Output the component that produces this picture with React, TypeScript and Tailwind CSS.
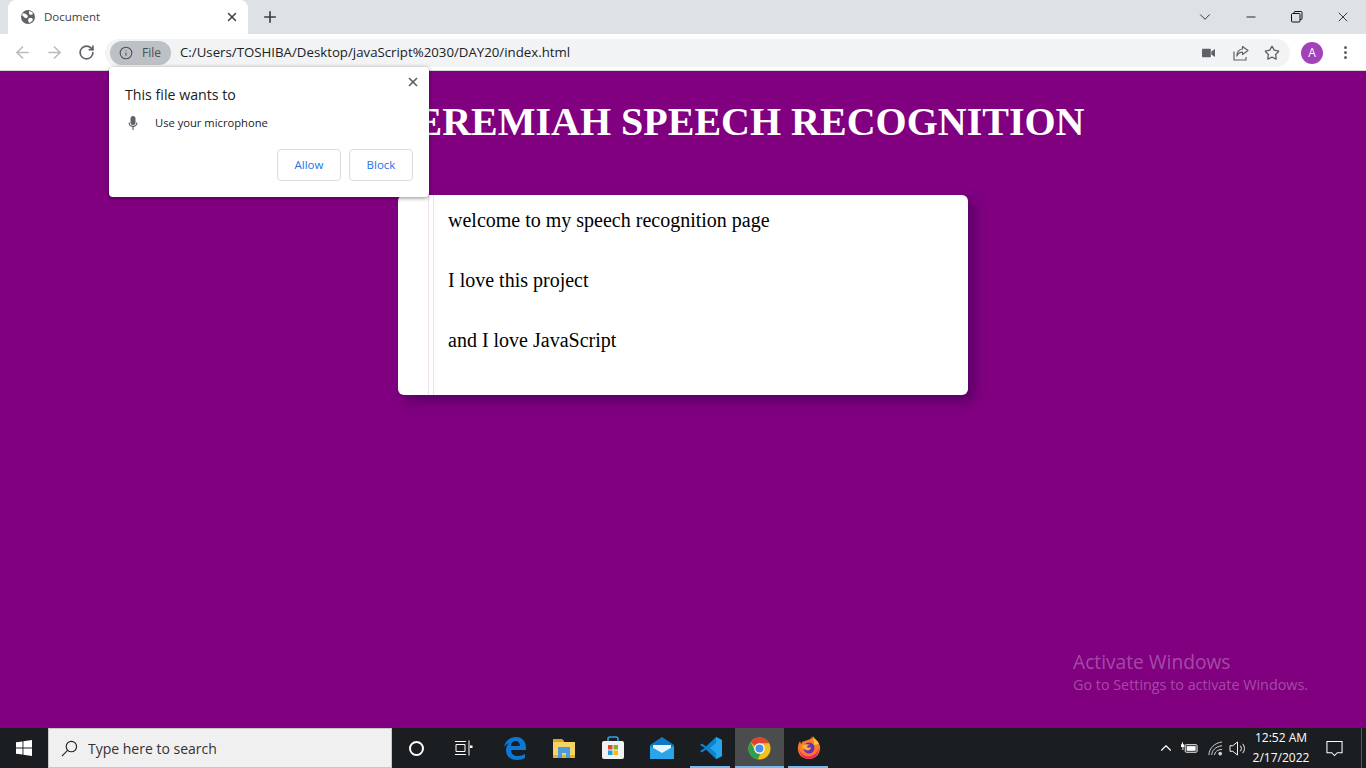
import { ArrowLeft, ArrowRight, ChevronDown, ChevronUp, Info, Minus, Plus, RotateCw, Star, X } from 'lucide-react';

const ui = "font-['Open_Sans','Noto_Sans',sans-serif]";

function Globe() {
  return (
    <svg viewBox="0 0 16 16" className="w-4 h-4">
      <circle cx="8" cy="8" r="7" fill="#5f6368" />
      <path d="M3 4l3 1 2 2-1 2-2 0-2-2-1-1zM9 2l3 1 1 2-2 1-2-1zM9 9l3 0 1 2-2 2-2 1-1-3z" fill="#fff" />
    </svg>
  );
}

function RestoreIcon() {
  return (
    <svg viewBox="0 0 12 12" className="w-[12px] h-[12px]" fill="none" stroke="#111" strokeWidth="1">
      <rect x="0.5" y="2.5" width="8.5" height="8.5" rx="1" />
      <path d="M3 2.5V1.5a1 1 0 0 1 1-1h6a1 1 0 0 1 1 1v6a1 1 0 0 1-1 1H9" />
    </svg>
  );
}

function ShareIcon() {
  return (
    <svg viewBox="0 0 16 16" className="w-[16px] h-[16px]" fill="none" stroke="#5f6368" strokeWidth="1.2">
      <path d="M1 6.5V15h12v-3" />
      <path d="M9.5 1.5L15 5.5l-5.500 4V7.200C7 7.200 5 8.500 3.800 11c.2-4 2.400-6.600 5.700-7z" strokeLinejoin="round" />
    </svg>
  );
}

function CameraIcon() {
  return (
    <svg viewBox="0 0 14 10" className="w-[13px] h-[10px]" fill="#5f6368">
      <rect x="0" y="0.500" width="9.500" height="9" rx="0.800" />
      <path d="M10 3.500L14 0.800V9.200L10 6.500z" />
    </svg>
  );
}

function MicIcon() {
  return (
    <svg viewBox="0 0 16 16" className="w-[16px] h-[16px]" fill="#5f6368">
      <rect x="5.500" y="1" width="5" height="9" rx="2.500" />
      <path d="M3.500 7.500H4.700a3.300 3.300 0 0 0 6.600 0h1.200a4.500 4.500 0 0 1-3.900 4.400V15H7.400v-3.100A4.500 4.500 0 0 1 3.500 7.500z" />
    </svg>
  );
}

function TabStrip() {
  return (
    <div className="flex h-[34px] bg-[#dee1e6] pl-2">
      <div className="flex items-center w-[240px] h-full bg-white rounded-t-lg pl-3 pr-[9px]">
        <Globe />
        <span className="ml-2 flex-1 text-[11.500px] text-[#3c4043]">Document</span>
        <X className="w-[14px] h-[14px] text-[#3c4043]" strokeWidth={2.500} />
      </div>
      <div className="flex items-center justify-center w-[44px] h-full">
        <Plus className="w-[18px] h-[18px] text-[#3c4043]" strokeWidth={2.200} />
      </div>
      <div className="flex-1" />
      <div className="flex items-center justify-center w-[46px] h-full"><ChevronDown className="w-[18px] h-[18px] text-[#222]" strokeWidth={1.200} /></div>
      <div className="flex items-center justify-center w-[46px] h-full"><Minus className="w-[14px] h-[14px] text-[#111]" strokeWidth={1.500} /></div>
      <div className="flex items-center justify-center w-[46px] h-full"><RestoreIcon /></div>
      <div className="flex items-center justify-center w-[46px] h-full"><X className="w-[16px] h-[16px] text-[#111]" strokeWidth={1.200} /></div>
    </div>
  );
}

function Toolbar() {
  return (
    <div className="flex items-center h-[37px] bg-white pl-[6px] pt-[1px] border-b border-[#d5d6da]">
      <div className="flex items-center justify-center w-[32px]"><ArrowLeft className="w-[19px] h-[19px] text-[#b9bbbe]" strokeWidth={2} /></div>
      <div className="flex items-center justify-center w-[32px]"><ArrowRight className="w-[19px] h-[19px] text-[#b9bbbe]" strokeWidth={2} /></div>
      <div className="flex items-center justify-center w-[32px]"><RotateCw className="w-[17px] h-[17px] text-[#5f6368]" strokeWidth={2.400} /></div>
      <div className="flex items-center ml-[3px] w-[1185px] h-[28px] rounded-full bg-[#f1f3f4] pl-[5px] pr-[10px]">
        <div className="flex items-center w-[61px] h-[24px] rounded-full bg-[#bdc1c6] pl-[9px]">
          <Info className="w-[14px] h-[14px] text-[#4a4d51]" strokeWidth={1.800} />
          <span className="ml-[9px] text-[12px] text-[#4a4d51]">File</span>
        </div>
        <span className="ml-[9px] flex-1 text-[13.250px] text-[#202124]">C:/Users/TOSHIBA/Desktop/javaScript%2030/DAY20/index.html</span>
        <CameraIcon />
        <div className="ml-[18px]"><ShareIcon /></div>
        <Star className="ml-[15px] w-[16px] h-[16px] text-[#5f6368]" strokeWidth={2} />
      </div>
      <div className="flex items-center justify-center ml-[11px] w-[22px] h-[22px] rounded-full bg-[#a142b8] text-white text-[12px]">A</div>
      <div className="flex flex-col items-center gap-[2px] ml-[20px] w-[4px]">
        <span className="w-[3px] h-[3px] rounded-full bg-[#5f6368]" />
        <span className="w-[3px] h-[3px] rounded-full bg-[#5f6368]" />
        <span className="w-[3px] h-[3px] rounded-full bg-[#5f6368]" />
      </div>
    </div>
  );
}

function PermissionPopup() {
  return (
    <div className={`absolute left-[109px] top-[67px] w-[320px] h-[130px] bg-white rounded-[4px] shadow-[0_1px_4px_rgba(0,0,0,0.45)] px-4 pt-[18px] ${ui}`}>
      <X className="absolute right-[9px] top-[8px] w-[14px] h-[14px] text-[#5f6368]" strokeWidth={3} />
      <div className="text-[14.200px] leading-[20px] text-[#202124]">This file wants to</div>
      <div className="flex items-center mt-[8px] h-[20px]">
        <MicIcon />
        <span className="ml-[14px] text-[11.200px] text-[#202124]">Use your microphone</span>
      </div>
      <div className="flex justify-end gap-2 mt-[16px]">
        <div className="flex items-center justify-center w-[64px] h-[32px] rounded-[4px] border border-[#dadce0] text-[11.500px] font-medium text-[#1a73e8]">Allow</div>
        <div className="flex items-center justify-center w-[64px] h-[32px] rounded-[4px] border border-[#dadce0] text-[11.500px] font-medium text-[#1a73e8]">Block</div>
      </div>
    </div>
  );
}

function Page() {
  return (
    <div className="relative flex-1 bg-[#800080] font-['Liberation_Serif',serif] overflow-hidden">
      <h1 className="pl-[114px] mt-[28px] mb-[50px] text-center text-[40px] leading-[46px] font-bold text-white">JEREMIAH SPEECH RECOGNITION</h1>
      <div className="flex mx-auto w-[570px] h-[200px] bg-white rounded-[6px] shadow-[6px_6px_12px_rgba(60,0,80,0.6)] text-[20px] leading-[40px] text-black">
        <div className="w-[31px] border-r border-[#eee2ee]" />
        <div className="w-[5px] border-r border-[#eee2ee]" />
        <div className="flex flex-col gap-[20px] pl-[14px] pt-[5px]">
          <p>welcome to my speech recognition page</p>
          <p>I love this project</p>
          <p>and I love JavaScript</p>
        </div>
      </div>
      <div className={`absolute left-[1073px] top-[578px] text-white/30 ${ui}`}>
        <div className="text-[19.200px] leading-[26px]">Activate Windows</div>
        <div className="text-[14.350px] leading-[20px]">Go to Settings to activate Windows.</div>
      </div>
    </div>
  );
}

function EdgeLogo() {
  return (
    <svg viewBox="0 0 24 24" className="w-[24px] h-[24px]">
      <path d="M1 11C2 5 7 1 13 1c6 0 10 4 10 11v2H8c0 4 3 6 7 6 3 0 5-1 7-2v4c-2 1-5 2-8 2-7 0-11-4-11-10 0-3 1-5 3-7-2 1-4 2-5 4zM8 10h9c0-3-2-5-4-5-3 0-5 2-5 5z" fill="#0a78d4" />
    </svg>
  );
}

function FolderLogo() {
  return (
    <svg viewBox="0 0 24 24" className="w-[24px] h-[24px]">
      <path d="M1 3h9l2 2h0v2H1z" fill="#d9a521" />
      <path d="M1 6h22v16H1z" fill="#f6d365" />
      <path d="M1 19h22v3H1z" fill="#e5b22d" />
      <path d="M6 11h12v11h-4v-5h-4v5H6z" fill="#4a9ee0" />
    </svg>
  );
}

function StoreLogo() {
  return (
    <svg viewBox="0 0 24 24" className="w-[24px] h-[24px]">
      <path d="M7 7V3a2 2 0 0 1 2-2h6a2 2 0 0 1 2 2v4" fill="none" stroke="#2aa5e8" strokeWidth="1.500" />
      <rect x="1" y="5" width="22" height="18" rx="2" fill="#f2f2f2" />
      <rect x="7" y="9" width="4.500" height="4.500" fill="#e8492c" />
      <rect x="12.500" y="9" width="4.500" height="4.500" fill="#76b82a" />
      <rect x="7" y="14.500" width="4.500" height="4.500" fill="#1ba1e2" />
      <rect x="12.500" y="14.500" width="4.500" height="4.500" fill="#fbb900" />
    </svg>
  );
}

function MailLogo() {
  return (
    <svg viewBox="0 0 24 24" className="w-[24px] h-[24px]">
      <path d="M12 1L24 9v14H0V9z" fill="#0f78c8" />
      <path d="M3 9h18v6l-9 5-9-5z" fill="#e8f4fb" />
      <path d="M0 10l12 7 12-7v13H0z" fill="#2ba5ea" />
    </svg>
  );
}

function VsCodeLogo() {
  return (
    <svg viewBox="0 0 24 24" className="w-[24px] h-[24px]">
      <path d="M17 1l6 3v16l-6 3L7 13.500l-4 3-2-1.500 5-3-5-3 2-1.500 4 3z" fill="#0a84d0" />
      <path d="M17 1l6 3v16l-6 3zM17 7l-6 5 6 5z" fill="#25a5ec" fillRule="evenodd" />
    </svg>
  );
}

function ChromeLogo() {
  return (
    <svg viewBox="0 0 24 24" className="w-[23px] h-[23px]">
      <circle cx="12" cy="12" r="11.500" fill="#f2c21a" />
      <path d="M12 .5A11.500 11.500 0 0 1 22 6.500H12a5.500 5.500 0 0 0-5 3L2.800 5A11.500 11.500 0 0 1 12 .5z" fill="#dc4437" />
      <path d="M2.800 5L7.500 14.500a5.500 5.500 0 0 0 5.500 3l-3 6A11.500 11.500 0 0 1 2.800 5z" fill="#2e9e4f" />
      <circle cx="12" cy="12" r="5.500" fill="#fff" />
      <circle cx="12" cy="12" r="4.200" fill="#4a8df0" />
    </svg>
  );
}

function FirefoxLogo() {
  return (
    <svg viewBox="0 0 24 24" className="w-[24px] h-[24px]">
      <path d="M15 0c0 3 6 4 8 10 1 7-4 13-11 13S0 18 1 11c0-2 1-4 2-6l1 3c1-2 2-3 4-3 3-1 7-2 7-5z" fill="#fb7b2a" />
      <path d="M2 12c1 6 6 9 12 8 3-1 6-3 8-8 0 6-4 11-10 11S2 18 2 12z" fill="#ee2a5c" />
      <path d="M16 0c1 3 5 4 6 8l-5 1c0-3-1-6-1-9z" fill="#fcc23a" />
      <circle cx="12" cy="12" r="5.500" fill="#6a2fb8" />
      <path d="M5 10c2-2 6-2 8-1-2 0-3 1-3 2 1 1 3 1 4 0 0 3-3 4-5 3s-4-2-4-4z" fill="#fbb03b" />
    </svg>
  );
}

function TaskViewIcon() {
  return (
    <svg viewBox="0 0 18 16" className="w-[18px] h-[16px]" fill="none" stroke="#fff" strokeWidth="1">
      <path d="M0 1.500h11M0 14.500h11M1 4.500h9v7H1zM14 .5v15" />
      <rect x="15" y="5.500" width="2.500" height="2.500" fill="#fff" stroke="none" />
    </svg>
  );
}

function AppSlot({ children, active, open }: { children: React.ReactNode; active?: boolean; open?: boolean }) {
  return (
    <div className={`relative flex items-center justify-center w-[49px] h-full ${active ? 'bg-[#4a4c4e]' : ''}`}>
      {children}
      {active && <span className="absolute bottom-0 inset-x-0 h-[2px] bg-[#76b9ed]" />}
      {open && <span className="absolute bottom-0 left-[4px] right-[5px] h-[2px] bg-[#76b9ed]" />}
    </div>
  );
}

function Taskbar() {
  return (
    <div className={`flex items-center h-[40px] bg-[#1b1e21] text-white ${ui}`}>
      <div className="flex items-center justify-center w-[48px] h-full">
        <svg viewBox="0 0 16 16" className="w-[16px] h-[16px]" fill="#fff">
          <path d="M0 2.300L6.500 1.400V7.600H0zM7.400 1.300L16 0V7.600H7.400zM0 8.400H6.500V14.600L0 13.700zM7.400 8.400H16V16L7.400 14.700z" />
        </svg>
      </div>
      <div className="flex items-center w-[344px] h-full bg-[#f0f0f0] border border-[#c8c8c8] pl-[12px]">
        <svg viewBox="0 0 18 18" className="w-[17px] h-[17px]" fill="none" stroke="#222" strokeWidth="1.200">
          <circle cx="11" cy="7" r="5.500" />
          <path d="M7 11l-6 6" />
        </svg>
        <span className="ml-[10px] text-[14px] text-[#333]">Type here to search</span>
      </div>
      <div className="flex items-center justify-center w-[48px] h-full">
        <span className="w-[15px] h-[15px] rounded-full border-2 border-white" />
      </div>
      <div className="flex items-center justify-center w-[47px] h-full mr-[3px]"><TaskViewIcon /></div>
      <AppSlot><EdgeLogo /></AppSlot>
      <AppSlot><FolderLogo /></AppSlot>
      <AppSlot><StoreLogo /></AppSlot>
      <AppSlot><MailLogo /></AppSlot>
      <AppSlot open><VsCodeLogo /></AppSlot>
      <AppSlot active><ChromeLogo /></AppSlot>
      <AppSlot open><FirefoxLogo /></AppSlot>
      <div className="flex-1" />
      <ChevronUp className="w-[18px] h-[18px] text-white" strokeWidth={1.500} />
      <svg viewBox="0 0 18 12" className="ml-[6px] w-[17px] h-[12px]" fill="#fff">
        <rect x="4.500" y="2.500" width="12.500" height="8" rx="1" fill="none" stroke="#fff" />
        <rect x="6" y="4" width="9.500" height="5" />
        <path d="M0 2h3.500v3H0zM1 0h1v2H1zM1.500 5h1v3h-1z" />
      </svg>
      <svg viewBox="0 0 16 16" className="ml-[10px] w-[15px] h-[15px]" fill="none" stroke="#ddd" strokeWidth="1">
        <path d="M1 15C1 8 7 2 15 1M4 15c0-5 4-9 11-10M7 15c0-3 3-6 8-6" />
        <circle cx="13" cy="13.500" r="1.500" fill="#ddd" />
      </svg>
      <svg viewBox="0 0 18 16" className="ml-[6px] w-[17px] h-[15px]" fill="none" stroke="#fff" strokeWidth="1">
        <path d="M1 5h3l5-4v14l-5-4H1zM12 5c1.500 2 1.500 4 0 6M14.500 3c2.500 3 2.500 7 0 10" />
      </svg>
      <div className="flex flex-col items-center ml-[4px] w-[62px] text-[12px] leading-[20px] text-white">
        <span>12:52 AM</span>
        <span>2/17/2022</span>
      </div>
      <div className="flex items-center justify-center ml-[6px] w-[32px]">
        <svg viewBox="0 0 18 18" className="w-[17px] h-[17px]" fill="none" stroke="#fff" strokeWidth="1.100">
          <path d="M1 1.500h16v12h-5l-3 3-3-3H1z" />
        </svg>
      </div>
      <div className="ml-[11px] mr-[4px] w-[1px] h-full bg-[#55585a]" />
    </div>
  );
}

export default function App() {
  return (
    <div className="relative flex flex-col w-[1366px] h-[768px] overflow-hidden">
      <div className={ui}>
        <TabStrip />
        <Toolbar />
      </div>
      <Page />
      <Taskbar />
      <PermissionPopup />
    </div>
  );
}
